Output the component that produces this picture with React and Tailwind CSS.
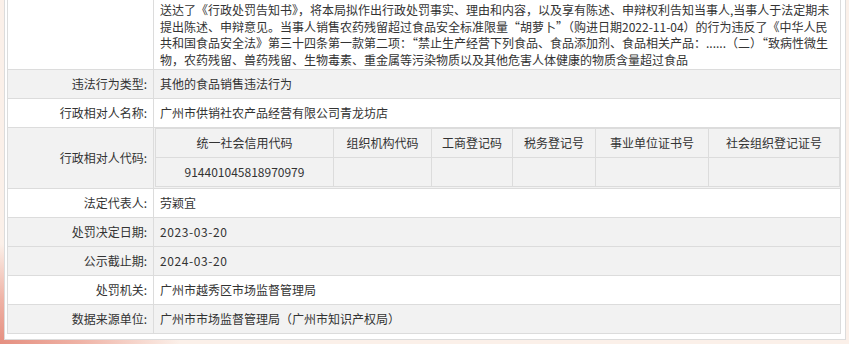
import React from "react";

const PARAGRAPH = [
  "送达了《行政处罚告知书》，将本局拟作出行政处罚事实、理由和内容，以及享有陈述、申辩权利告知当事人,当事人于法定期未",
  "提出陈述、申辩意见。当事人销售农药残留超过食品安全标准限量“胡萝卜”（购进日期2022-11-04）的行为违反了《中华人民",
  "共和国食品安全法》第三十四条第一款第二项：“禁止生产经营下列食品、食品添加剂、食品相关产品：......（二）“致病性微生",
  "物，农药残留、兽药残留、生物毒素、重金属等污染物质以及其他危害人体健康的物质含量超过食品",
];

const CODE_HEADERS = [
  "统一社会信用代码",
  "组织机构代码",
  "工商登记码",
  "税务登记号",
  "事业单位证书号",
  "社会组织登记证号",
];
const CODE_VALUES = ["914401045818970979", "", "", "", "", ""];

function Row({ label, grey, children }) {
  return (
    <div className={`flex h-[29px] border-b border-[#dcdcdc] ${grey ? "bg-[#f2f2f2]" : "bg-white"}`}>
      <div className="w-[146px] shrink-0 border-r border-[#dcdcdc] flex items-center justify-end pr-[6px]">
        {label}:
      </div>
      <div className="flex-1 flex items-center pl-[6px]">{children}</div>
    </div>
  );
}

function CodeTable() {
  return (
    <div className="grid grid-cols-[178px_98px_81px_83px_113px_1fr] border border-[#dcdcdc] bg-[#f2f2f2]">
      {CODE_HEADERS.map((h, i) => (
        <div
          key={h}
          className={`h-[29px] flex items-center justify-center border-b border-[#dcdcdc] ${i < 5 ? "border-r" : ""}`}
        >
          {h}
        </div>
      ))}
      {CODE_VALUES.map((v, i) => (
        <div
          key={i}
          className={`h-[28px] flex items-center justify-center border-[#dcdcdc] ${i < 5 ? "border-r" : ""}`}
        >
          {v}
        </div>
      ))}
    </div>
  );
}

export default function App() {
  return (
    <div
      className="h-[344px] w-[849px] overflow-hidden bg-[#fbf0e9] bg-[radial-gradient(ellipse_180px_100px_at_0%_100%,#e58f80_0%,#efb3a6_45%,rgba(251,240,233,0)_100%)] text-[12px] text-[#333]"
      style={{ fontFamily: '"Noto Sans CJK SC", "Noto Sans", sans-serif' }}
    >
      <div className="ml-[4px] w-[842px] border border-t-0 border-[#dcdcdc] bg-white pl-[2px] pr-[4px] pb-[5px]">
        <div className="border-l border-r border-[#dcdcdc]">
          {/* tail of the penalty description cell */}
          <div className="flex h-[70px] border-b border-[#dcdcdc] bg-white">
            <div className="w-[146px] shrink-0 border-r border-[#dcdcdc]" />
            <div className="flex-1 pl-[6px] pt-[2px] leading-[16.7px]">
              {PARAGRAPH.map((line) => (
                <div key={line} className="whitespace-nowrap">
                  {line}
                </div>
              ))}
            </div>
          </div>

          <Row label="违法行为类型" grey>其他的食品销售违法行为</Row>
          <Row label="行政相对人名称">广州市供销社农产品经营有限公司青龙坊店</Row>

          <div className="flex h-[61px] border-b border-[#dcdcdc] bg-[#f2f2f2]">
            <div className="w-[146px] shrink-0 border-r border-[#dcdcdc] flex items-center justify-end pr-[6px]">
              行政相对人代码:
            </div>
            <div className="flex-1 pl-[1px]">
              <CodeTable />
            </div>
          </div>

          <Row label="法定代表人">劳颖宜</Row>
          <Row label="处罚决定日期" grey>
            <span className="tracking-[0.6px]">2023-03-20</span>
          </Row>
          <Row label="公示截止期" grey>
            <span className="tracking-[0.6px]">2024-03-20</span>
          </Row>
          <Row label="处罚机关">广州市越秀区市场监督管理局</Row>
          <Row label="数据来源单位" grey>广州市市场监督管理局（广州市知识产权局）</Row>
        </div>
      </div>
    </div>
  );
}
